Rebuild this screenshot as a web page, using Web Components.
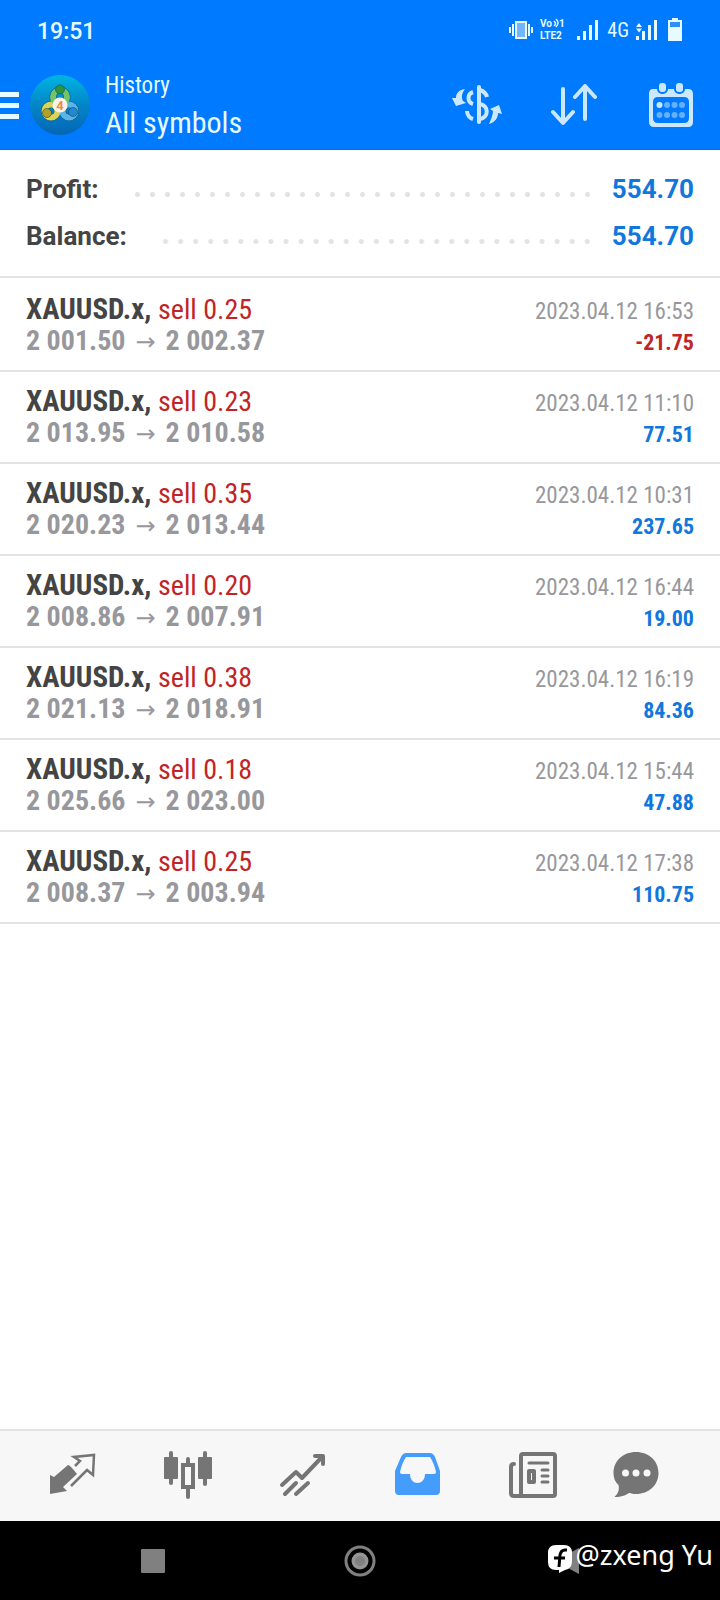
<!DOCTYPE html>
<html lang="en">
<head>
<meta charset="utf-8">
<meta name="viewport" content="width=device-width, initial-scale=1">
<title>History</title>
<style>
  body { margin: 0; background: #fff; font-family: Roboto, sans-serif; }
</style>
</head>
<body>
<history-screen>
  <status-bar slot="top"></status-bar>
  <app-header slot="top"><span slot="title">History</span><span slot="subtitle">All symbols</span></app-header>
  <summary-panel>
    <summary-line><span slot="label">Profit:</span>554.70</summary-line>
    <summary-line><span slot="label">Balance:</span>554.70</summary-line>
  </summary-panel>
  <deal-list>
    <deal-row volume="0.25" open="2 001.50" close="2 002.37" time="2023.04.12 16:53" profit="-21.75"></deal-row>
    <deal-row volume="0.23" open="2 013.95" close="2 010.58" time="2023.04.12 11:10" profit="77.51"></deal-row>
    <deal-row volume="0.35" open="2 020.23" close="2 013.44" time="2023.04.12 10:31" profit="237.65"></deal-row>
    <deal-row volume="0.20" open="2 008.86" close="2 007.91" time="2023.04.12 16:44" profit="19.00"></deal-row>
    <deal-row volume="0.38" open="2 021.13" close="2 018.91" time="2023.04.12 16:19" profit="84.36"></deal-row>
    <deal-row volume="0.18" open="2 025.66" close="2 023.00" time="2023.04.12 15:44" profit="47.88"></deal-row>
    <deal-row volume="0.25" open="2 008.37" close="2 003.94" time="2023.04.12 17:38" profit="110.75"></deal-row>
  </deal-list>
  <tab-bar slot="bottom"></tab-bar>
  <system-nav slot="bottom"><span>@zxeng Yu</span></system-nav>
</history-screen>

<script>
const define = (name, html, setup) => {
  const template = document.createElement('template');
  template.innerHTML = html;
  customElements.define(name, class extends HTMLElement {
    constructor() {
      super();
      this.attachShadow({ mode: 'open' }).append(template.content.cloneNode(true));
    }
    connectedCallback() { if (setup) setup(this, this.shadowRoot); }
  });
};

define('history-screen', `
  <style>
    :host { display: flex; flex-direction: column; min-height: 100vh; }
    main { flex: 1; }
  </style>
  <header><slot name="top"></slot></header>
  <main><slot></slot></main>
  <footer><slot name="bottom"></slot></footer>`);

define('status-bar', `
  <style>
    :host { display: flex; align-items: center; height: 60px; padding: 0 38px 0 37px; background: #007aff; color: #e6fbff;
            font: 500 23px/28px Roboto, sans-serif; }
    .time { padding-top: 4px; }
    .icons { display: flex; align-items: center; margin-left: auto; }
    svg { display: block; fill: #e6fbff; }
    .net { font: 20px/28px "Roboto Condensed", Roboto, sans-serif; margin: 0 7px 0 8px; }
    .volte { margin: 0 7px 0 6px; }
    .battery { margin-left: 10px; }
    text { font: 700 10px Roboto, sans-serif; }
  </style>
  <span class="time">19:51</span>
  <span class="icons">
    <svg width="26" height="20" viewBox="0 0 26 20"><path d="M1 7h2v6H1zM4 4h2v12H4zM20 4h2v12h-2zM23 7h2v6h-2z"/><rect x="8" y="2" width="10" height="16" fill="#73b6ff" stroke="#e6fbff" stroke-width="2"/></svg>
    <svg class="volte" width="30" height="32" viewBox="0 0 30 32"><text x="0" y="13">Vo</text><path d="M14 7q3 3 0 5M16 5q4 4 0 8" fill="none" stroke="#e6fbff" stroke-width="1.500"/><text x="19" y="13">1</text><text x="0" y="25">LTE2</text></svg>
    <svg width="22" height="20" viewBox="0 0 22 20"><path d="M0 16h3v4H0zM6 11h3v9H6zM12 5h3v15h-3zM18 0h3v20h-3z"/></svg>
    <span class="net">4G</span>
    <svg width="22" height="20" viewBox="0 0 22 20"><path d="M0 16h3v4H0zM6 11h3v9H6zM12 5h3v15h-3zM18 0h3v20h-3zM0 7l3-4 3 4zM0 8.500h6l-3 4z"/></svg>
    <svg class="battery" width="14" height="24" viewBox="0 0 14 24"><path d="M4 0h6v2h4v21H0V2h4z"/><path d="M2 4h10v5H2z" fill="#2f8ff5"/></svg>
  </span>`);

define('app-header', `
  <style>
    :host { display: flex; align-items: center; box-sizing: border-box; height: 90px; padding-right: 26px;
            background: #007aff; border-bottom: 1px solid #0a6fd8; color: #e6fbff; }
    button { display: block; border: 0; padding: 0; margin: 0; background: none; color: inherit; }
    svg { display: block; }
    .menu { width: 20px; }
    .logo { margin: 0 15px 0 10px; }
    .heading { padding-top: 6px; }
    h1, p { margin: 0; font: 23px/30px "Roboto Condensed", Roboto, sans-serif; }
    h1 { font-size: 30px; line-height: 44px; }
    .actions { display: flex; align-items: center; gap: 49px; margin-left: auto; color: #cce8ff; }
  </style>
  <button class="menu" aria-label="Menu"><svg width="20" height="30" viewBox="0 0 20 30"><path d="M0 2h19v5H0zM0 13h19v5H0zM0 24h19v5H0z" fill="currentColor"/></svg></button>
  <svg class="logo" width="60" height="60" viewBox="0 0 60 60" role="img" aria-label="MetaTrader 4">
    <defs>
      <linearGradient id="bg" x2="0" y2="1"><stop stop-color="#00b5e2"/><stop offset=".5" stop-color="#0485c8"/><stop offset="1" stop-color="#0466b5"/></linearGradient>
    </defs>
    <circle cx="30" cy="30" r="30" fill="url(#bg)"/>
    <g fill="none">
      <g stroke="#0b5c76" stroke-width="7"><circle cx="30" cy="22" r="7"/><circle cx="21" cy="36" r="6.500"/><circle cx="39" cy="36" r="6.500"/></g>
      <g stroke-width="6"><circle cx="21" cy="36" r="6.500" stroke="#d8d455"/><circle cx="39" cy="36" r="6.500" stroke="#5ab4ea"/><circle cx="30" cy="22" r="7" stroke="#74c46c"/></g>
    </g>
    <g stroke="#0b4c66" stroke-opacity=".6" stroke-width="1">
      <circle cx="30" cy="14.500" r="4.500" fill="#2f9440"/>
      <circle cx="17" cy="38" r="4.500" fill="#b3a024"/>
      <circle cx="43" cy="37" r="4.500" fill="#2389cf"/>
    </g>
    <circle cx="30" cy="30" r="7.500" fill="#fbf3e6"/>
    <text x="30" y="35" text-anchor="middle" font-family="Roboto, sans-serif" font-size="13" font-weight="700" fill="#f08a3c">4</text>
  </svg>
  <div class="heading"><p><slot name="title"></slot></p><h1><slot name="subtitle"></slot></h1></div>
  <div class="actions">
    <button aria-label="Symbol filter"><svg width="50" height="46" viewBox="0 0 50 46" fill="currentColor">
      <path d="M13 7C6 8 4 12 4 16L0 16 4 24 14 21 11 19C9 15 10 11 13 7zM37 42c6-2 9-6 9-11l4 1-3-9-9 4 3 2c0 4-2 8-4 13z"/>
      <path d="M21 10c-6 2-6 10 0 12M15 29c0 4 3 7 6 8" fill="none" stroke="currentColor" stroke-width="4"/>
      <rect x="25" y="3" width="4" height="39" rx="2"/>
      <path d="M28 8c3 1 6 3 7 7M28 22c9 2 9 13 0 15" fill="none" stroke="currentColor" stroke-width="4"/>
    </svg></button>
    <button aria-label="Sort"><svg width="48" height="46" viewBox="0 0 48 46" fill="none" stroke="currentColor" stroke-width="4" stroke-linecap="round" stroke-linejoin="round"><path d="M12 7v33M2 30l10 11 10-11M34 37V4M24 15L34 4l10 11"/></svg></button>
    <button aria-label="Select period"><svg width="46" height="46" viewBox="0 0 46 46">
      <path d="M5 7h35q5 0 5 5v28q0 5-5 5H6q-5 0-5-5V12q0-5 4-5zM10 15q-5 0-5 5v16q0 5 5 5h26q5 0 5-5V20q0-5-5-5z" fill="currentColor" fill-rule="evenodd"/>
      <g fill="currentColor" stroke="#007aff" stroke-width="2"><rect x="10" y="0" width="9" height="11" rx="4"/><rect x="27" y="0" width="9" height="11" rx="4"/></g>
      <g fill="#66b0ff"><circle cx="19" cy="23" r="3"/><circle cx="26.500" cy="23" r="3"/><circle cx="34" cy="23" r="3"/><circle cx="11.500" cy="33" r="3"/><circle cx="19" cy="33" r="3"/><circle cx="26.500" cy="33" r="3"/><circle cx="34" cy="33" r="3"/></g>
      <circle cx="11.500" cy="23" r="3" fill="currentColor"/>
    </svg></button>
  </div>`);

define('summary-panel', `
  <style>
    :host { display: block; padding: 16px 26px; border-bottom: 2px solid #e3e3e3; }
  </style>
  <slot></slot>`);

define('summary-line', `
  <style>
    :host { display: flex; align-items: center; height: 47px; font: 700 26px/47px Roboto, sans-serif; color: #1177dd; }
    .label { color: #444; }
    .dots { flex: 1; height: 5px; margin: 10px 17px 0 31px;
            background: radial-gradient(circle, #e3e3e3 2px, transparent 3px) 0 0 / 15px 5px space no-repeat; }
  </style>
  <span class="label"><slot name="label"></slot></span><span class="dots"></span><span><slot></slot></span>`);

define('deal-list', `
  <style>:host { display: block; padding-top: 2px; }</style>
  <slot></slot>`);

define('deal-row', `
  <style>
    :host { display: block; padding: 13px 26px; border-bottom: 2px solid #e3e3e3;
            font: 29px/32px "Roboto Condensed", Roboto, sans-serif; }
    div { display: flex; align-items: baseline; justify-content: space-between; height: 32px; }
    b { color: #444; }
    .side { font-size: 28px; color: #c22426; }
    .prices { font-size: 28px; font-weight: 700; color: #98989c; }
    .arrow { font: 24px/32px "DejaVu Sans", sans-serif; margin: 0 10px; }
    time { font-size: 23px; color: #98989c; }
    .profit { font-size: 22px; font-weight: 700; color: #1177dd; }
    .loss { color: #c22426; }
  </style>
  <div><span><b>XAUUSD.x,</b> <span class="side">sell <span class="volume"></span></span></span><time></time></div>
  <div><span class="prices"><span class="open"></span><span class="arrow">→</span><span class="close"></span></span><span class="profit"></span></div>`,
  (el, root) => {
    for (const k of ['volume', 'open', 'close', 'profit']) root.querySelector('.' + k).textContent = el.getAttribute(k);
    root.querySelector('time').textContent = el.getAttribute('time');
    root.querySelector('.profit').classList.toggle('loss', el.getAttribute('profit').startsWith('-'));
  });

define('tab-bar', `
  <style>
    :host { display: block; background: #f7f7f7; border-top: 2px solid #e3e3e3; }
    nav { display: grid; grid-template-columns: repeat(5, 5fr) 4fr; height: 90px; padding: 0 38px 0 16px; }
    button { display: grid; place-items: center; border: 0; padding: 0 0 2px; background: none; color: #757575; }
    button[aria-current] { color: #449cfd; }
    svg { display: block; }
  </style>
  <nav aria-label="Sections">
    <button aria-label="Quotes"><svg width="48" height="48" viewBox="0 0 48 48"><path d="M1 24L5 26 19 14q2 0 9 9L14 36l4 4L1 43z" fill="currentColor"/><path d="M26 15l5-5-6-4L45 4l-1 20-6-5-16 16" fill="none" stroke="currentColor" stroke-width="2.500"/></svg></button>
    <button aria-label="Chart"><svg width="48" height="48" viewBox="0 0 48 48"><path d="M7 2v30M41 2v31M24 8v6M24 36v10" stroke="currentColor" stroke-width="4" stroke-linecap="round"/><g fill="currentColor"><rect x="0" y="6" width="14" height="22" rx="1"/><rect x="34" y="6" width="14" height="22" rx="1"/></g><rect x="19" y="14" width="10" height="22" fill="none" stroke="currentColor" stroke-width="4"/></svg></button>
    <button aria-label="Trade"><svg width="48" height="48" viewBox="0 0 48 48" fill="none" stroke="currentColor" stroke-width="4" stroke-linecap="round" stroke-linejoin="round"><path d="M3 34L17 21l6 6L43 6M36 5h8v8M6 43l11-11M17 43l12-11"/></svg></button>
    <button aria-label="History" aria-current="page"><svg width="48" height="48" viewBox="0 0 48 48"><path d="M12 2h24q3 0 5 4l5 14v20q0 4-4 4H5q-4 0-4-4V20L7 6q2-4 5-4zM12 6q-4 6-6 15 0 2 2 2h8c0 12 15 12 15 0h9q2 0 2-2-2-9-6-15z" fill="currentColor" fill-rule="evenodd"/></svg></button>
    <button aria-label="News"><svg width="48" height="48" viewBox="0 0 48 48" fill="none" stroke="currentColor" stroke-width="4" stroke-linecap="round" stroke-linejoin="round"><rect x="12" y="3" width="34" height="42" rx="2"/><path d="M5 13q-3 0-3 3v26q0 3 3 3h9"/><path d="M20 12h19M33 19h6M33 25h6M33 31h6" stroke-width="3"/><rect x="20" y="20" width="5" height="11"/></svg></button>
    <button aria-label="Messages"><svg width="48" height="48" viewBox="0 0 48 48"><path d="M24 1c13 0 22.500 9 22.500 21S37 43 24 43c-3 0-4-.5-7-1-3 2-7 4-14.500 4 4-4 5-7 4-12C3 31 1.500 27 1.500 22 1.500 10 11 1 24 1z" fill="currentColor"/><g fill="#f7f7f7"><circle cx="13.500" cy="22" r="3.500"/><circle cx="24" cy="22" r="3.500"/><circle cx="35" cy="22" r="3.500"/></g></svg></button>
  </nav>`);

define('system-nav', `
  <style>
    :host { display: block; position: relative; background: #000; }
    nav { display: grid; grid-template-columns: repeat(3, 1fr); height: 79px; padding: 0 50px; }
    button { display: grid; place-items: center; border: 0; padding: 0; background: none; color: #808080; }
    svg { display: block; }
    .mark { position: absolute; right: 7px; top: 15px; display: flex; align-items: flex-end; gap: 3px;
            color: #fff; font: 27px/38px "Noto Sans", Roboto, sans-serif; }
  </style>
  <nav aria-label="System">
    <button aria-label="Recent apps"><svg width="26" height="26" viewBox="0 0 26 26"><rect x="1" y="1" width="24" height="24" rx="1" fill="currentColor"/></svg></button>
    <button aria-label="Home"><svg width="32" height="32" viewBox="0 0 32 32"><circle cx="16" cy="16" r="14" fill="none" stroke="currentColor" stroke-width="3"/><circle cx="16" cy="16" r="8.500" fill="#949494"/><circle cx="16" cy="16" r="5" fill="#808080"/></svg></button>
    <button aria-label="Back"><svg width="26" height="26" viewBox="0 0 26 26"><path d="M25 0v26L1 13z" fill="currentColor"/></svg></button>
  </nav>
  <div class="mark">
    <svg width="26" height="30" viewBox="0 0 26 30"><path d="M9 1h8q8 0 8 8v8q0 8-7 9l-6 3v-3H9q-8 0-8-8V9q0-8 8-8z" fill="#fff"/><path d="M20 6h-2q-4 0-5 5l-1 12M7 14h11" fill="none" stroke="#000" stroke-width="3"/></svg>
    <slot></slot>
  </div>`);
</script>
</body>
</html>
